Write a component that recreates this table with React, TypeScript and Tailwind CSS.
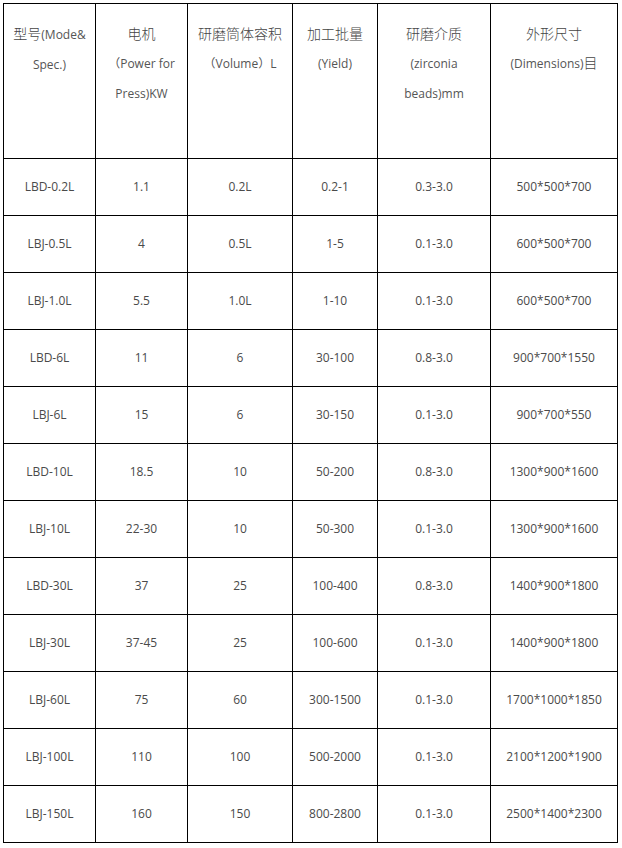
import React from "react";

const rows: string[][] = [
  ["LBD-0.2L", "1.1", "0.2L", "0.2-1", "0.3-3.0", "500*500*700"],
  ["LBJ-0.5L", "4", "0.5L", "1-5", "0.1-3.0", "600*500*700"],
  ["LBJ-1.0L", "5.5", "1.0L", "1-10", "0.1-3.0", "600*500*700"],
  ["LBD-6L", "11", "6", "30-100", "0.8-3.0", "900*700*1550"],
  ["LBJ-6L", "15", "6", "30-150", "0.1-3.0", "900*700*550"],
  ["LBD-10L", "18.5", "10", "50-200", "0.8-3.0", "1300*900*1600"],
  ["LBJ-10L", "22-30", "10", "50-300", "0.1-3.0", "1300*900*1600"],
  ["LBD-30L", "37", "25", "100-400", "0.8-3.0", "1400*900*1800"],
  ["LBJ-30L", "37-45", "25", "100-600", "0.1-3.0", "1400*900*1800"],
  ["LBJ-60L", "75", "60", "300-1500", "0.1-3.0", "1700*1000*1850"],
  ["LBJ-100L", "110", "100", "500-2000", "0.1-3.0", "2100*1200*1900"],
  ["LBJ-150L", "160", "150", "800-2800", "0.1-3.0", "2500*1400*2300"],
];

const Zh = ({ children }: { children: React.ReactNode }) => (
  <span className="text-[14px] text-[#444] font-light">{children}</span>
);
const En = ({ children }: { children: React.ReactNode }) => (
  <span className="text-[12px] text-[#555]">{children}</span>
);

const headCell =
  "border-r border-b border-black h-[155px] pt-[15px] text-center leading-[28px] whitespace-nowrap";
const cell =
  "border-r border-b border-black h-[57px] flex items-center justify-center text-[12px] text-[#4a4a4a] whitespace-nowrap";

export default function App() {
  return (
    <div
      className="bg-white w-[622px] h-[848px] pt-[3px] pl-[3px]"
      style={{ fontFamily: '"Open Sans", "Noto Sans CJK SC", sans-serif' }}
    >
      <div className="grid grid-cols-[92px_92px_105px_85px_113px_127px] border-l border-t border-black w-[615px]">
        <div className={headCell}>
          <Zh>型号</Zh>
          <En>(Mode&amp;</En>
          <br />
          <En>Spec.)</En>
        </div>
        <div className={headCell}>
          <Zh>电机</Zh>
          <br />
          <En>（Power for</En>
          <br />
          <En>Press)KW</En>
        </div>
        <div className={headCell}>
          <Zh>研磨筒体容积</Zh>
          <br />
          <En>（Volume）L</En>
        </div>
        <div className={headCell}>
          <Zh>加工批量</Zh>
          <br />
          <En>(Yield)</En>
        </div>
        <div className={headCell}>
          <Zh>研磨介质</Zh>
          <br />
          <En>(zirconia</En>
          <br />
          <En>beads)mm</En>
        </div>
        <div className={headCell}>
          <Zh>外形尺寸</Zh>
          <br />
          <En>(Dimensions)</En>
          <Zh>目</Zh>
        </div>
        {rows.map((r, i) =>
          r.map((v, j) => (
            <div key={`${i}-${j}`} className={cell}>
              {v}
            </div>
          ))
        )}
      </div>
    </div>
  );
}
